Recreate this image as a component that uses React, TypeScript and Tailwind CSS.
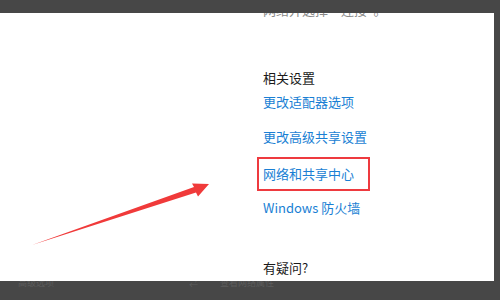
const font = { fontFamily: '"Noto Sans CJK SC", "Noto Sans", sans-serif' };

const Arrow = () => (
  <svg
    className="pointer-events-none absolute left-0 top-0"
    width="500"
    height="300"
    viewBox="0 0 500 300"
  >
    <polygon
      points="32,245 194,187 192,183.5 209,184 198,196.5 196,192.5"
      fill="#f03a3a"
    />
  </svg>
);

export default function App() {
  return (
    <div
      className="relative flex h-[300px] w-[500px] flex-col overflow-hidden bg-[#474747]"
      style={font}
    >
      <div className="mt-[13px] flex h-[268px]">
        <div className="h-[268px] w-[494px] overflow-hidden bg-white">
          <div className="flex flex-col pl-[263px] text-[13px] leading-[20px]">
            <div className="mt-[-13px] text-[#8a8a8a]">网络并选择“连接”。</div>
            <div className="mt-[48px] text-[#1a1a1a]">相关设置</div>
            <div className="mt-[4px] text-[#1a7fd4]">更改适配器选项</div>
            <div className="mt-[15px] text-[#1a7fd4]">更改高级共享设置</div>
            <div className="-ml-[6px] mt-[10px] flex h-[34px] w-[113px] items-center border-2 border-[#ee3a3f] pl-[4px] text-[#1a7fd4]">
              网络和共享中心
            </div>
            <div className="mt-[7px] text-[#1a7fd4]">Windows 防火墙</div>
            <div className="mt-[40px] text-[#1a1a1a]">有疑问?</div>
          </div>
        </div>
      </div>
      <div className="flex h-[8px] items-start overflow-hidden text-[9px] leading-[10px] text-[#5c5c5c]">
        <span className="ml-[18px] mt-[-3px]">高级选项</span>
        <span className="ml-[135px] mt-[-3px]">⇄</span>
        <span className="ml-[22px] mt-[-3px]">查看网络属性</span>
      </div>
      <Arrow />
    </div>
  );
}
